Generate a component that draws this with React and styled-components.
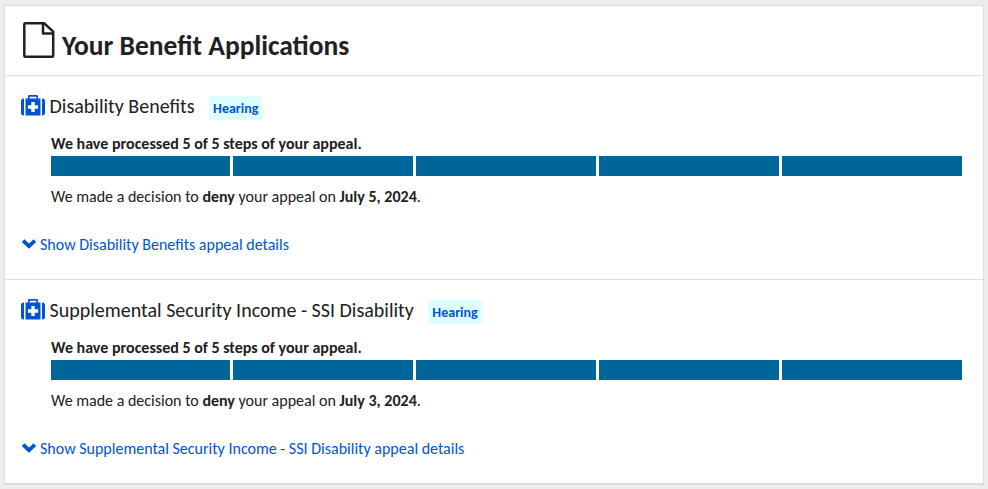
import styled, { createGlobalStyle } from "styled-components";

const applications = [
  { name: "Disability Benefits", level: "Hearing", date: "July 5, 2024" },
  {
    name: "Supplemental Security Income - SSI Disability",
    level: "Hearing",
    date: "July 3, 2024",
  },
];

const steps = [1, 2, 3, 4, 5];

export default function App() {
  return (
    <>
      <GlobalStyle />
      <Card>
        <CardHeader>
          <FileIcon />
          <Title>Your Benefit Applications</Title>
        </CardHeader>
        {applications.map(({ name, level, date }) => (
          <Application key={name}>
            <ApplicationHeader>
              <MedkitIcon />
              <ApplicationName>{name}</ApplicationName>
              <Badge>{level}</Badge>
            </ApplicationHeader>
            <Status>
              <StepText>
                We have processed 5 of {steps.length} steps of your appeal.
              </StepText>
              <Progress>
                {steps.map((step) => (
                  <Step key={step} />
                ))}
              </Progress>
              <Decision>
                We made a decision to <strong>deny</strong> your appeal on{" "}
                <strong>{date}</strong>.
              </Decision>
            </Status>
            <DetailsButton type="button">
              <ChevronIcon />
              Show {name} appeal details
            </DetailsButton>
          </Application>
        ))}
      </Card>
    </>
  );
}

function FileIcon() {
  return (
    <StyledFile width="32" height="37" viewBox="0 0 32 37">
      <path d="M2.3 1.3H21.3L30.2 9.6V33.7Q30.2 34.8 29.1 34.8H2.4Q1.3 34.8 1.3 33.7V2.3Q1.3 1.3 2.3 1.3Z" />
      <path d="M20 1.5V11.4H30" />
    </StyledFile>
  );
}

function MedkitIcon() {
  return (
    <StyledMedkit width="24" height="21" viewBox="0 0 24 21">
      <path d="M3 3.5V20.5H2.7Q0 20.5 0 17.8V6.2Q0 3.5 2.7 3.5Z" />
      <path d="M21 3.5H21.3Q24 3.5 24 6.2V17.8Q24 20.5 21.3 20.5H21Z" />
      <path
        fillRule="evenodd"
        d="M7 3.5V1.3Q7 0 8.3 0H15.7Q17 0 17 1.3V3.5H19.5V20.5H4.5V3.5ZM8.7 1.7V3.5H15.3V1.7ZM10.3 6.9V10.3H6.9V13.7H10.3V17.1H13.7V13.7H17.1V10.3H13.7V6.9Z"
      />
    </StyledMedkit>
  );
}

function ChevronIcon() {
  return (
    <StyledChevron width="15" height="10" viewBox="0 0 15 10">
      <path d="M2.1 1.7L8 7.2L13.9 1.7" />
    </StyledChevron>
  );
}

const GlobalStyle = createGlobalStyle`
  * {
    box-sizing: border-box;
  }

  body {
    margin: 0;
    background-color: #ededed;
    color: #212121;
    font-family: Carlito, Lato, sans-serif;
    font-size: 16px;
  }
`;

const Card = styled.main`
  width: 980px;
  height: 480px;
  margin: 5px 0 0 4px;
  background-color: #fff;
  border: 1px solid #dcdcdc;
  border-bottom-width: 2px;
`;

const CardHeader = styled.header`
  display: flex;
  height: 69px;
  padding: 16px 0 0 18px;
`;

const StyledFile = styled.svg`
  flex: none;
  fill: none;
  stroke: #212121;
  stroke-width: 2.5;
  stroke-linejoin: round;
`;

const Title = styled.h1`
  margin: 8px 0 0 7px;
  font-size: 27.5px;
  line-height: 32px;
  white-space: nowrap;
`;

const Application = styled.section`
  height: 204px;
  padding: 16px 21px 0 16px;
  border-top: 1px solid #dcdcdc;
`;

const ApplicationHeader = styled.div`
  display: flex;
  align-items: flex-start;
  height: 40px;
`;

const StyledMedkit = styled.svg`
  flex: none;
  margin-top: 3px;
  fill: #0054cf;
`;

const ApplicationName = styled.h2`
  margin: 1px 0 0 4.5px;
  font-size: 20px;
  font-weight: 400;
  line-height: 26px;
  white-space: nowrap;
`;

const Badge = styled.span`
  height: 24px;
  margin: 4px 0 0 14.5px;
  padding: 1px 4px 0;
  background-color: #dff;
  color: #0054cf;
  font-size: 14px;
  font-weight: 700;
  line-height: 24px;
`;

const Status = styled.div`
  padding-left: 30px;
`;

const StepText = styled.p`
  height: 24px;
  margin: 0;
  font-weight: 700;
  line-height: 24px;
`;

const Progress = styled.div`
  display: grid;
  grid-template-columns: 179px repeat(4, 1fr);
  gap: 3px;
  height: 20px;
`;

const Step = styled.div`
  background-color: #00669a;
`;

const Decision = styled.p`
  margin: 11px 0 0;
  line-height: 20px;
`;

const DetailsButton = styled.button`
  display: flex;
  align-items: center;
  gap: 4px;
  height: 24px;
  margin-top: 25px;
  padding: 0;
  background: none;
  border: none;
  color: #0054cf;
  font: inherit;
  white-space: nowrap;
`;

const StyledChevron = styled.svg`
  flex: none;
  fill: none;
  stroke: #0054cf;
  stroke-width: 3.8;
`;
